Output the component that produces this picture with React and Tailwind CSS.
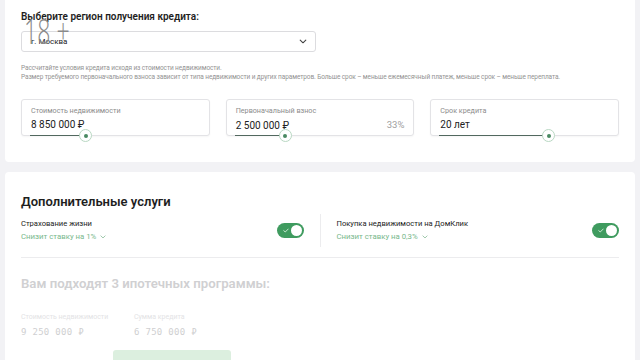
import React from 'react';

const font = { fontFamily: 'Roboto, "Noto Sans", sans-serif' };
const mono = { fontFamily: '"DejaVu Sans Mono", monospace' };

const Chevron = ({ className = '' }) => (
  <svg viewBox="0 0 10 6" className={className} fill="none" stroke="currentColor" strokeWidth="1.4" strokeLinecap="round" strokeLinejoin="round">
    <path d="M1.5 1.2 5 4.6 8.5 1.2" />
  </svg>
);

const Toggle = () => (
  <div className="relative w-[27px] h-[15px] rounded-full bg-[#3f9b5f] flex items-center">
    <svg viewBox="0 0 8 6" className="absolute left-[6px] w-[6px] h-[5px]" fill="none" stroke="#d9f0df" strokeWidth="1.2" strokeLinecap="round" strokeLinejoin="round">
      <path d="M1 3.2 3 5 7 1" />
    </svg>
    <div className="absolute right-[2px] w-[11px] h-[11px] rounded-full bg-white" />
  </div>
);

const Field = ({ label, value, extra, thumb }) => (
  <div className="relative flex-1 h-[37px] border border-[#e3e3e6] rounded-[3px] bg-white px-[9px] pt-[6px] shadow-[0_1px_2px_rgba(0,0,0,0.04)]">
    <div className="text-[7.2px] leading-[9px] text-[#8c8c8c]">{label}</div>
    <div className="flex items-center justify-between mt-[3px]">
      <span className="text-[10px] leading-[13px] text-[#222]">{value}</span>
      {extra && <span className="text-[9.5px] text-[#a0a0a0]">{extra}</span>}
    </div>
    <div className="absolute bottom-[-1px] left-[8px] h-[1.5px] bg-[#52685f]" style={{ width: thumb - 8 }} />
    <div
      className="absolute bottom-[-7px] w-[13px] h-[13px] rounded-full bg-white border border-[#b9d8c3] flex items-center justify-center"
      style={{ left: thumb - 6 }}
    >
      <div className="w-[4px] h-[4px] rounded-full bg-[#4a8a62]" />
    </div>
  </div>
);

const Service = ({ title, hint }) => (
  <div className="flex-1 flex items-center justify-between">
    <div>
      <div className="text-[7.6px] leading-[12px] text-[#222]">{title}</div>
      <div className="flex items-center gap-[4px] text-[7.8px] leading-[12px] text-[#78b88c] mt-[1px]">
        {hint}
        <Chevron className="w-[6px] h-[4px] text-[#8fbf9d]" />
      </div>
    </div>
    <Toggle />
  </div>
);

export default function App() {
  return (
    <div className="w-[640px] h-[360px] overflow-hidden bg-[#f2f2f5] px-[5px]" style={font}>
      <div className="relative bg-white rounded-b-[4px] px-[16px] pt-[10px] h-[162px]">
        <div className="text-[10px] leading-[14px] font-semibold text-[#1e1e1e]">Выберите регион получения кредита:</div>
        <div className="mt-[7px] w-[295px] h-[21px] border border-[#dcdcdf] rounded-[3px] flex items-center justify-between pl-[9px] pr-[8px]">
          <span className="text-[8px] text-[#222]">г. Москва</span>
          <Chevron className="w-[8px] h-[5px] text-[#444]" />
        </div>
        <div
          className="absolute left-[19px] top-[14px] text-[34px] leading-[34px] font-light text-[#8a8a8a] origin-left scale-x-[0.68]"
          style={{ fontFamily: '"Open Sans", sans-serif' }}
        >
          18 +
        </div>
        <div className="mt-[12px] text-[6.5px] leading-[9px] text-[#939393] tracking-[-0.1px]">
          <div>Рассчитайте условия кредита исходя из стоимости недвижимости.</div>
          <div className="whitespace-nowrap">Размер требуемого первоначального взноса зависит от типа недвижимости и других параметров. Больше срок – меньше ежемесячный платеж, меньше срок – меньше переплата.</div>
        </div>
        <div className="mt-[17px] flex gap-[16px]">
          <Field label="Стоимость недвижимости" value="8 850 000 ₽" thumb={63} />
          <Field label="Первоначальный взнос" value="2 500 000 ₽" extra="33%" thumb={58} />
          <Field label="Срок кредита" value="20 лет" thumb={117} />
        </div>
      </div>

      <div className="mt-[10px] bg-white rounded-t-[4px] px-[16px] pt-[21px] h-[200px]">
        <div className="text-[13px] leading-[17px] font-semibold text-[#1e1e1e]">Дополнительные услуги</div>
        <div className="mt-[8px] flex items-stretch">
          <Service title="Страхование жизни" hint="Снизит ставку на 1%" />
          <div className="mx-[16px] w-px bg-[#ececee] my-[-4px]" />
          <Service title="Покупка недвижимости на ДомКлик" hint="Снизит ставку на 0,3%" />
        </div>
        <div className="mt-[14px] h-px bg-[#ececee]" />
        <div className="mt-[17px] text-[13.2px] leading-[18px] font-semibold text-[#d0d0d2]">Вам подходят 3 ипотечных программы:</div>
        <div className="mt-[20px] flex gap-[22px]">
          <div className="w-[91px]">
            <div className="text-[7px] leading-[9px] text-[#e3e3e5] whitespace-nowrap">Стоимость недвижимости</div>
            <div className="mt-[4px] text-[9px] leading-[12px] text-[#cfcfd1] tracking-[0.3px]" style={mono}>9 250 000 ₽</div>
          </div>
          <div>
            <div className="text-[7px] leading-[9px] text-[#e3e3e5]">Сумма кредита</div>
            <div className="mt-[4px] text-[9px] leading-[12px] text-[#cfcfd1] tracking-[0.3px]" style={mono}>6 750 000 ₽</div>
          </div>
        </div>
        <div className="mt-[12px] ml-[92px] w-[118px] h-[20px] rounded-[3px] bg-[#dcefdf]" />
      </div>
    </div>
  );
}
